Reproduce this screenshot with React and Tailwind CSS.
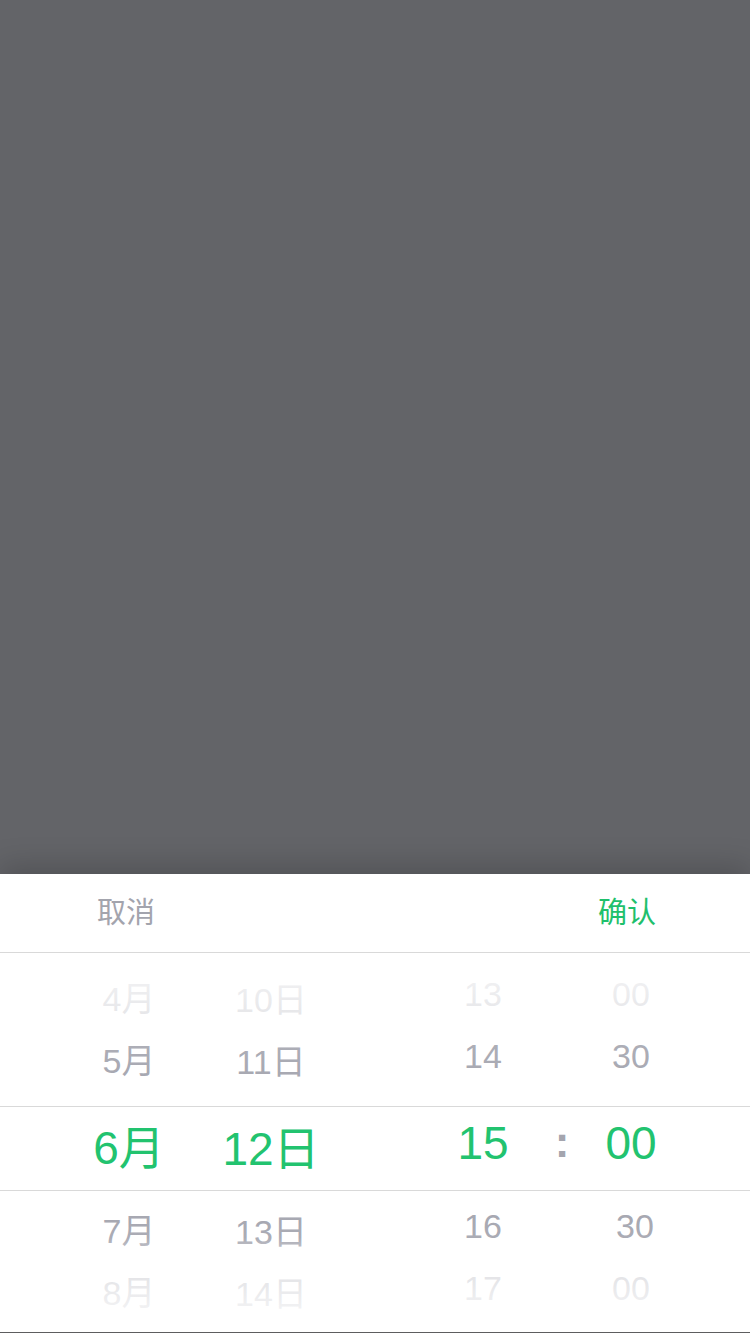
import React from 'react';

const FONT = "font-['Liberation_Sans','Noto_Sans_CJK_SC',sans-serif]";

const columns = [
  { key: 'month', width: 'w-[142px]', pad: 'pt-[15px]', items: ['4月', '5月', '6月', '7月', '8月'] },
  { key: 'day', width: 'w-[142px]', pad: 'pt-[16px]', items: ['10日', '11日', '12日', '13日', '14日'] },
];

const timeColumns = {
  hour: ['13', '14', '15', '16', '17'],
  minute: ['00', '30', '00', '30', '00'],
};

const Cell = ({ text, selected, nudge }) => (
  <div
    className={`h-[62px] flex items-center justify-center whitespace-nowrap leading-none ${
      selected ? 'mt-[25px] mb-[21px] text-[46px] text-[#22c36f]' : 'text-[34px] text-[#a2a3ad]'
    } ${nudge ? 'pl-[8px]' : ''}`}
  >
    {text}
  </div>
);

const Column = ({ width, pad, items, nudgeRow }) => (
  <div className={`${width} ${pad} flex flex-col`}>
    {items.map((t, i) => (
      <Cell key={i} text={t} selected={i === 2} nudge={i === nudgeRow} />
    ))}
  </div>
);

const App = () => {
  return (
    <div className={`h-[1334px] w-[750px] flex flex-col overflow-hidden ${FONT}`}>
      <div className="flex-1 bg-[#636468]" />

      <div className="h-[460px] bg-white flex flex-col shadow-[0_-8px_28px_rgba(0,0,0,0.18)] relative">
        <div className="h-[79px] border-b border-[#d9d9d9] flex items-center justify-between pl-[97px] pr-[94px] text-[29px] leading-none">
          <button className="text-[#a3a4ad]">取消</button>
          <button className="text-[#1fc06c]">确认</button>
        </div>

        <div className="relative h-[379px]">
          <div className="absolute left-0 right-0 top-[153px] h-[85px] border-y border-[#d9d9d9]" />

          <div className="relative flex pl-[58px]">
            {columns.map((c) => (
              <Column key={c.key} width={c.width} pad={c.pad} items={c.items} />
            ))}
            <div className="w-[81px]" />
            <Column width="w-[120px]" pad="pt-[10px]" items={timeColumns.hour} />
            <div className="w-[38px] pt-[159px] flex flex-col">
              <div className="h-[62px] flex items-center justify-center pb-[2px] text-[44px] font-bold leading-none text-[#a4a5ae]">
                :
              </div>
            </div>
            <Column width="w-[100px]" pad="pt-[10px]" items={timeColumns.minute} nudgeRow={3} />
          </div>

          <div className="absolute left-0 right-0 top-0 h-[153px] pointer-events-none bg-[linear-gradient(to_bottom,rgba(255,255,255,0.92)_0%,rgba(255,255,255,0.74)_40%,rgba(255,255,255,0.12)_60%,rgba(255,255,255,0)_100%)]" />
          <div className="absolute left-0 right-0 bottom-0 h-[141px] pointer-events-none bg-[linear-gradient(to_bottom,rgba(255,255,255,0)_0%,rgba(255,255,255,0.1)_33%,rgba(255,255,255,0.68)_55%,rgba(255,255,255,0.96)_100%)]" />
        </div>

        <div className="h-px bg-[#5d5d5f]" />
      </div>
    </div>
  );
};

export default App;
